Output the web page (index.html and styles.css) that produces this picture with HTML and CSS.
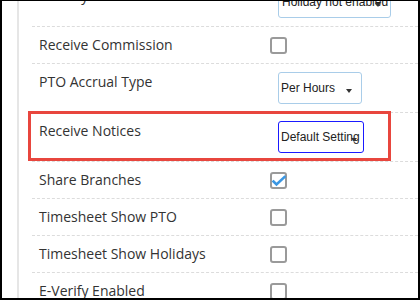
FILE: index.html
```html
<!DOCTYPE html>
<html>
<head>
<meta charset="utf-8">
<link rel="stylesheet" href="styles.css">
</head>
<body>
<div class="frame">
  <div class="gutter"></div>
  <div class="panel">
    <div class="list">
      <div class="row row-select">
        <div class="label">Holiday</div>
        <div class="control"><div class="select select-holiday">Holiday not enabled</div></div>
      </div>
      <div class="row">
        <div class="label">Receive Commission</div>
        <div class="control"><span class="check"></span></div>
      </div>
      <div class="row row-select">
        <div class="label">PTO Accrual Type</div>
        <div class="control"><div class="select select-pto">Per Hours</div></div>
      </div>
      <div class="row row-select">
        <div class="label">Receive Notices</div>
        <div class="control"><div class="select select-focus">Default Setting</div></div>
      </div>
      <div class="row">
        <div class="label">Share Branches</div>
        <div class="control"><span class="check checked"><svg class="tick" viewBox="0 0 17 17" width="17" height="17"><polyline points="3.5,9.5 6.5,12.5 14.5,5" fill="none" stroke="#3b97e3" stroke-width="2.6" stroke-linecap="square"/></svg></span></div>
      </div>
      <div class="row">
        <div class="label">Timesheet Show PTO</div>
        <div class="control"><span class="check"></span></div>
      </div>
      <div class="row">
        <div class="label">Timesheet Show Holidays</div>
        <div class="control"><span class="check"></span></div>
      </div>
      <div class="row">
        <div class="label">E-Verify Enabled</div>
        <div class="control"><span class="check"></span></div>
      </div>
    </div>
  </div>
  <div class="highlight"></div>
</div>
</body>
</html>
```

FILE: styles.css
```css
html, body {
  margin: 0;
  padding: 0;
  background: #fff;
}

.frame {
  position: relative;
  width: 420px;
  height: 300px;
  box-sizing: border-box;
  border-style: solid;
  border-color: #000;
  border-width: 1px 2px 2px 2px;
  display: flex;
  overflow: hidden;
  background: #fff;
}

.gutter {
  width: 15px;
  flex: none;
}

.panel {
  flex: 1;
  border-left: 2px solid #e6e6e6;
  min-width: 0;
}

.list {
  margin-left: 13px;
  margin-top: -23px;
}

.row {
  display: grid;
  grid-template-columns: 231px 1fr;
  align-items: start;
  padding: 8px 0 8px 7px;
  border-bottom: 1px dashed #dcdcdc;
}

.label {
  font-family: "Open Sans", "DejaVu Sans", sans-serif;
  font-size: 14px;
  line-height: 20px;
  color: #333;
  white-space: nowrap;
}

.control {
  display: flex;
  align-items: center;
  min-height: 20px;
}

.check {
  position: relative;
  display: block;
  width: 17px;
  height: 17px;
  box-sizing: border-box;
  border: 2px solid #9a9a9a;
  border-radius: 3px;
  background: #fff;
}

.tick {
  position: absolute;
  left: -2px;
  top: -2px;
}

.select {
  position: relative;
  margin-left: 8px;
  height: 32px;
  box-sizing: border-box;
  border: 1px solid #a9cde9;
  border-radius: 3px;
  padding: 0 0 0 2px;
  display: flex;
  align-items: center;
  font-family: "Liberation Sans", Arial, sans-serif;
  font-size: 12px;
  color: #222;
  white-space: nowrap;
  overflow: hidden;
  background: #fff;
}

.select::after {
  content: "";
  position: absolute;
  right: 9px;
  top: 50%;
  margin-top: 1px;
  border-left: 3px solid transparent;
  border-right: 3px solid transparent;
  border-top: 4px solid #333;
}

.select-holiday {
  width: 113px;
  padding-left: 3px;
}

.select-pto {
  width: 84px;
}

.select-focus {
  width: 86px;
  border-color: #1a1aff;
}

.select-focus::after {
  right: 6px;
}

.highlight {
  position: absolute;
  left: 26px;
  top: 110px;
  width: 363px;
  height: 50px;
  box-sizing: border-box;
  border: 3px solid #e8463e;
}
```
